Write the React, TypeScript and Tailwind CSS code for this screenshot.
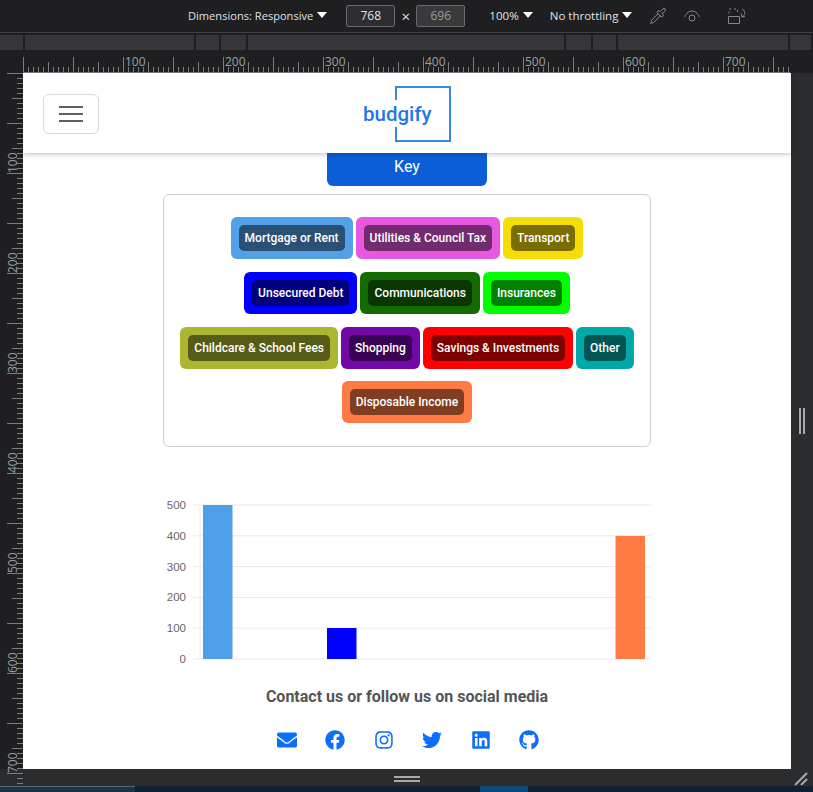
import { FaEnvelope, FaFacebook, FaInstagram, FaTwitter, FaLinkedin, FaGithub } from "react-icons/fa";
import { Pipette } from "lucide-react";

const rows = [
  [["Mortgage or Rent", "bg-[#55a1e8]"], ["Utilities & Council Tax", "bg-[#e757e0]"], ["Transport", "bg-[#f5dd07]"]],
  [["Unsecured Debt", "bg-[#0000ff]"], ["Communications", "bg-[#146c00]"], ["Insurances", "bg-[#00ff00]"]],
  [["Childcare & School Fees", "bg-[#acb631]"], ["Shopping", "bg-[#7209a6]"], ["Savings & Investments", "bg-[#ff0000]"], ["Other", "bg-[#00a8a8]"]],
  [["Disposable Income", "bg-[#ff7b43]"]],
];

function Caret() {
  return <span className="ml-[4px] mb-[3px] inline-block w-0 h-0 border-l-[5px] border-r-[5px] border-t-[6px] border-l-transparent border-r-transparent border-t-white" />;
}

function TopRuler() {
  const ticks = Array.from({ length: 160 }, (_, i) => i * 5);
  return (
    <svg width="790" height="22" className="block">
      {ticks.map((t) => {
        const h = t % 50 === 0 ? 15 : t % 25 === 0 ? 10 : 5;
        return <line key={t} x1={t + 23.5} x2={t + 23.5} y1={21} y2={21 - h} stroke="#7b7e82" strokeWidth="1" />;
      })}
      <line x1="23" x2="790" y1="21.5" y2="21.5" stroke="#7b7e82" />
      {[100, 200, 300, 400, 500, 600, 700].map((n) => (
        <text key={n} x={n + 25} y={15} fontSize="12" fill="#9aa0a6" fontFamily="Open Sans, sans-serif">{n}</text>
      ))}
    </svg>
  );
}

function LeftRuler() {
  const ticks = Array.from({ length: 144 }, (_, i) => i * 5);
  return (
    <svg width="23" height="713" className="block">
      {ticks.map((t) => {
        const h = t % 50 === 0 ? 16 : t % 25 === 0 ? 11 : 6;
        return <line key={t} x1={23} x2={23 - h} y1={t + 0.5} y2={t + 0.5} stroke="#7b7e82" strokeWidth="1" />;
      })}
      {[100, 200, 300, 400, 500, 600, 700].map((n) => (
        <text key={n} transform={`translate(17 ${n}) rotate(-90)`} fontSize="12" fill="#9aa0a6" fontFamily="Open Sans, sans-serif">{n}</text>
      ))}
    </svg>
  );
}

function Chart() {
  const ys = [505, 535.8, 566.6, 597.4, 628.2, 659].map((y) => y - 495);
  const labels = ["500", "400", "300", "200", "100", "0"];
  return (
    <svg width="510" height="175" className="block">
      {ys.map((y, i) => (
        <g key={i}>
          <line x1="40" x2="498" y1={y} y2={y} stroke="#e9e9e9" strokeWidth="1" />
          <text x="33" y={y + 4} textAnchor="end" fontSize="11.5" fill="#666" fontFamily="Liberation Sans, sans-serif">{labels[i]}</text>
        </g>
      ))}
      <line x1="47" x2="47" y1="10" y2="164" stroke="#eeeeee" />
      <rect x="50" y="10" width="29.5" height="154" fill="#4f9fea" />
      <rect x="174" y="133" width="29.5" height="31" fill="#0000ff" />
      <rect x="462.5" y="41" width="29.5" height="123" fill="#ff7b43" />
    </svg>
  );
}

export default function App() {
  return (
    <div className="w-[813px] h-[792px] overflow-hidden flex flex-col bg-[#2b2c2e] font-['Roboto',sans-serif]">
      {/* device toolbar */}
      <div className="h-[33px] shrink-0 bg-[#1f1f21] border-b border-[#3f4043] flex items-center text-[12px] text-[#dfe1e5] font-['Open_Sans',sans-serif] pl-[188px]">
        <span className="text-[11.1px]">Dimensions: Responsive</span>
        <Caret />
        <span className="ml-[19px] w-[49px] h-[22px] border border-[#6a6b6e] rounded-[2px] bg-[#2d2d30] flex items-center justify-center">768</span>
        <span className="w-[21px] text-center text-[15px]">×</span>
        <span className="w-[49px] h-[22px] border border-[#6a6b6e] rounded-[2px] bg-[#3a3a3c] flex items-center justify-center text-[#9a9b9d]">696</span>
        <span className="ml-[24px] text-[11.6px]">100%</span>
        <Caret />
        <span className="ml-[17px] text-[11.5px]">No throttling</span>
        <Caret />
        <Pipette size={18} strokeWidth={1} className="ml-[17px] text-[#b0b2b5]" />
        <svg width="18" height="14" viewBox="0 0 18 14" fill="none" stroke="#85888c" className="ml-[16px]">
          <path d="M1.5 8C3.5 4 6 2 9 2s5.5 2 7.5 6" />
          <circle cx="9" cy="9" r="3" />
        </svg>
        <svg width="20" height="20" viewBox="0 0 20 20" fill="none" stroke="#85888c" className="ml-[26px]">
          <path d="M1.5 10.5h11v7h-11z" />
          <path d="M2 7.5V4.5M2 3h3M7 3h2.5M10.5 4v3" strokeDasharray="2 1" />
          <path d="M15 3c2.5 1 3.5 4 2 6.5l-1.8 1.5M14 7.5l1 3.5 3-.5" />
        </svg>
      </div>
      {/* media query bar */}
      <div className="h-[18px] shrink-0 bg-[#1f1f21] pt-[2px] flex">
        {[25, 171, 25, 27, 319, 27, 25, 172, 23].map((w, i) => (
          <div key={i} style={{ width: w }} className="h-[15px] bg-[#35363a] border-r-2 border-[#1f1f21]" />
        ))}
      </div>
      {/* top ruler */}
      <div className="h-[22px] shrink-0 bg-[#1f1f21]">
        <TopRuler />
      </div>
      {/* workspace */}
      <div className="h-[696px] shrink-0 flex">
        <div className="w-[23px] shrink-0 bg-[#1f1f21]">
          <LeftRuler />
        </div>
        <main className="w-[768px] shrink-0 bg-white flex flex-col items-center">
          <nav className="w-full h-[80px] shrink-0 flex items-center pl-[20px] pt-[1px] shadow-[0_1px_5px_rgba(0,0,0,0.25)] relative z-10 bg-white">
            <button className="w-[56px] h-[40px] border border-[#d9d9d9] rounded-[6px] flex flex-col items-center justify-center gap-[5px]">
              <span className="w-[24px] h-[2px] bg-[#5f5f5f]" />
              <span className="w-[24px] h-[2px] bg-[#5f5f5f]" />
              <span className="w-[24px] h-[2px] bg-[#5f5f5f]" />
            </button>
            <div className="ml-[264px] relative w-[88px] h-[55px] flex items-center">
              <span className="text-[20.5px] font-medium text-[#1f78e6] leading-none mt-[1px]">budgify</span>
              <svg width="56" height="56" className="absolute left-[32px] top-0">
                <path d="M1 14V1H55V55H1V41" fill="none" stroke="#3a85e6" strokeWidth="2" />
              </svg>
            </div>
          </nav>
          <button className="w-[160px] h-[33px] shrink-0 bg-[#0b5ed7] rounded-b-[6px] text-white text-[16px] pb-[5px]">Key</button>
          <section className="mt-[8px] w-[488px] h-[253px] shrink-0 border border-[#cfcfcf] rounded-[6px] pt-[22px] flex flex-col items-center gap-y-[13px]">
            {rows.map((row, r) => (
              <div key={r} className="flex gap-x-[3px] last:-mt-px">
                {row.map(([label, bg]) => (
                  <div key={label} className={`${bg} p-[8px] rounded-[6px]`}>
                    <div className="bg-black/50 rounded-[5px] h-[26px] px-[6px] flex items-center text-[12px] font-medium text-white whitespace-nowrap">{label}</div>
                  </div>
                ))}
              </div>
            ))}
          </section>
          <div className="mt-[48px] w-[510px] h-[175px] shrink-0 ml-[2px]">
            <Chart />
          </div>
          <h5 className="mt-[17px] text-[16px] font-bold leading-[19px] text-[#555555]">Contact us or follow us on social media</h5>
          <div className="mt-[24px] ml-[2px] flex items-center gap-[28.5px] text-[#0d6efd] text-[20px]">
            <FaEnvelope />
            <FaFacebook />
            <FaInstagram />
            <FaTwitter />
            <FaLinkedin />
            <FaGithub />
          </div>
        </main>
        <div className="flex-1 flex items-center justify-center">
          <div className="w-[6px] h-[26px] border-x-2 border-[#a8a9aa]" />
        </div>
      </div>
      {/* bottom */}
      <div className="h-[17px] shrink-0 flex items-center justify-center relative">
        <div className="w-[26px] h-[6px] border-y-2 border-[#a8a9aa] mt-[3px]" />
        <svg width="14" height="14" className="absolute right-[5px] top-[3px]">
          <path d="M1 13L13 1M7 13L13 7" stroke="#a8a9aa" strokeWidth="2" />
        </svg>
      </div>
      <div className="flex-1 flex bg-[#0e2233]">
        <div className="w-[135px] bg-[#1d3344] border-t border-[#4a6a80]" />
        <div className="ml-[345px] w-[48px] bg-[#0c4a7a]" />
      </div>
    </div>
  );
}
